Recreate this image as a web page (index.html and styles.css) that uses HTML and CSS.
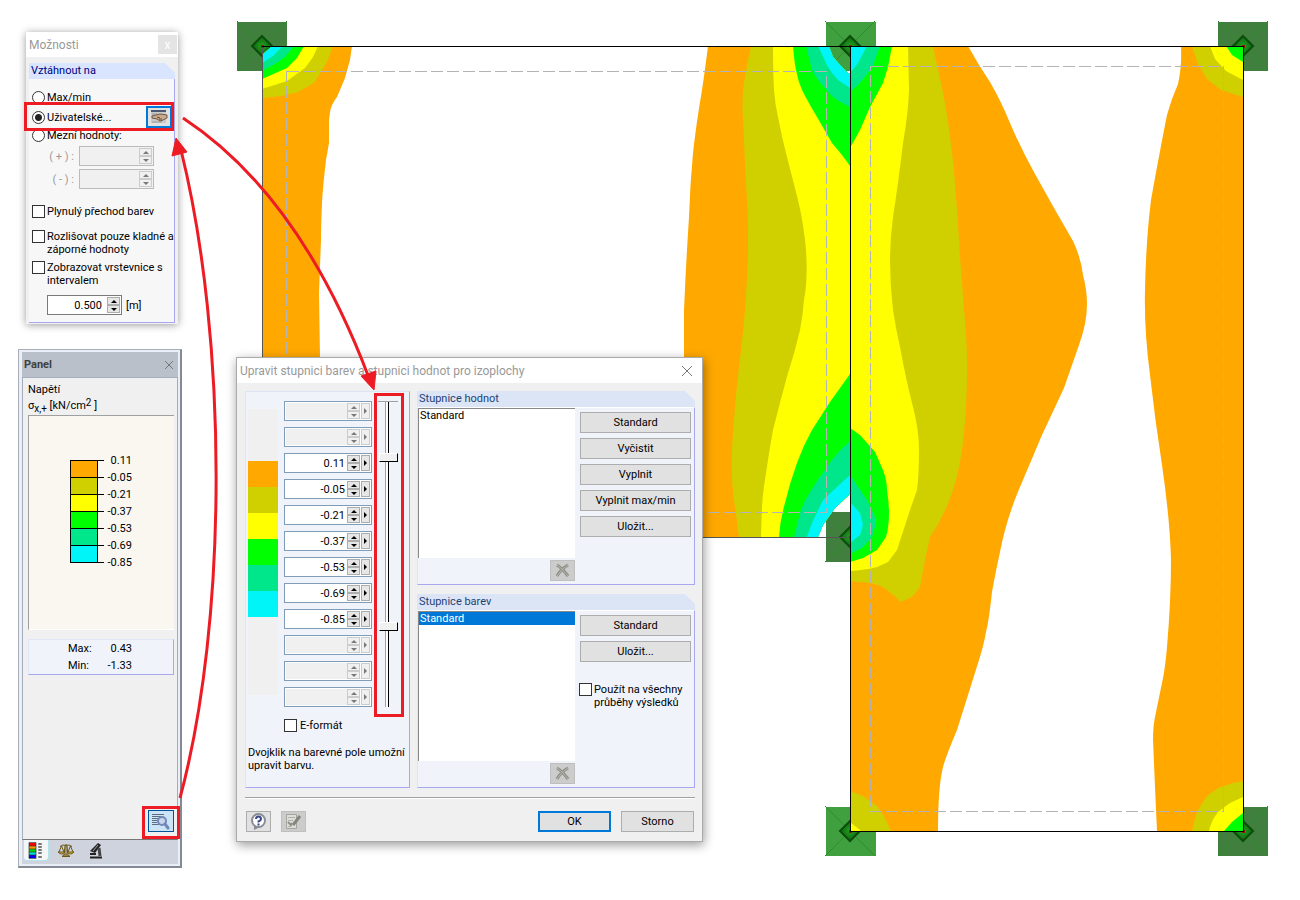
FILE: index.html
```html
<!DOCTYPE html>
<html lang="cs">
<head>
  <meta charset="UTF-8" />
  <meta name="viewport" content="width=device-width, initial-scale=1.0" />
  <title>Upravit stupnici barev</title>
  <link rel="stylesheet" href="styles.css">
</head>
<body>
<main class="workspace">

<!-- Model s izoplochami -->
<svg class="model" viewBox="0 0 1300 900" width="1300" height="900" aria-hidden="true">
  <defs>
    <clipPath id="plateLeft">
      <path clip-rule="evenodd" d="M262 46H850V537H262Z M262 46H272L262 55Z M829 46L833 57L842 67L848 73H850V46Z M818 537L823 525L835 508L850 494V537Z"/>
    </clipPath>
    <clipPath id="plateRight"><path d="M850 46H1243V831H850Z"/></clipPath>
    <radialGradient id="node"><stop offset="0" stop-color="#20a020"/><stop offset="1" stop-color="#106510"/></radialGradient>
    <g id="support">
      <path class="support-lines" d="M-25 -25L25 25M-25 25L25 -25"/>
      <path class="support-node" d="M0 -10L10 0L0 10L-10 0Z"/>
      <rect class="support-dot" x="-1" y="-1" width="3" height="3"/>
    </g>
  </defs>

  <!-- podpory -->
  <g class="supports">
    <rect class="dark" x="237" y="22" width="50" height="49"/>
    <rect class="light" x="826" y="22" width="50" height="49"/>
    <rect class="dark" x="1218" y="22" width="50" height="49"/>
    <rect class="dark" x="826" y="512" width="50" height="50"/>
    <rect class="light" x="826" y="807" width="50" height="49"/>
    <rect class="dark" x="1218" y="807" width="50" height="49"/>
    <use href="#support" x="262" y="46"/>
    <use href="#support" x="850" y="46"/>
    <use href="#support" x="1243" y="46"/>
    <use href="#support" x="850" y="537"/>
    <use href="#support" x="850" y="831"/>
    <use href="#support" x="1243" y="831"/>
  </g>

  <!-- levá deska -->
  <g clip-path="url(#plateLeft)">
    <path class="c1" d="M262 46H352L350 60L345 78L337 97Q331 105 330 112L329 120V143L326 160Q323 185 322 203Q321 225 321 240L319 293L320 358V537H262Z"/>
    <path class="c2" d="M262 46H333L327 62L314 83L298 92L282 96L262 98Z"/>
    <path class="c3" d="M262 46H318L313 57L305 68L287 81L262 89Z"/>
    <path class="c4" d="M262 46H304L297 58L287 68L262 79Z"/>
    <path class="c5" d="M262 46H294L285 57L275 64L262 71Z"/>
    <path class="c6" d="M262 46H283L273 56L262 63Z"/>
    <path class="c1" d="M850 46H708Q705 70 702 90Q696 125 693 153Q690 185 689 217Q686 263 684 310V357L690 537H850Z"/>
    <path class="c2" d="M850 46H751Q746 68 743 90Q742 105 743 120L746 183Q748 210 748 237Q748 270 745 310Q743 335 739 367Q735 400 733 433Q731 460 732 480Q733 495 735 507L739 537H850Z"/>
    <path class="c3" d="M850 46H773Q773 70 774 90Q775 104 778 117Q782 138 787 157Q793 180 798 200Q804 225 806 250Q808 280 804 300Q803 315 800 330Q795 352 788 373Q780 402 773 430Q769 452 766 473Q763 490 762 507L761 537H850Z"/>
    <path class="c4" d="M850 46H793Q794 60 796 70Q798 81 802 90Q808 102 817 117L832 143L842 155L850 166Z"/>
    <path class="c5" d="M850 46H806L812 70Q817 80 825 88Q831 96 837 100L850 107Z"/>
    <path class="c6" d="M850 46H818L827 65Q832 74 838 80L850 88Z"/>
    <path class="c4" d="M850 374L830 402L812 430Q803 446 797 463Q790 482 785 503Q780 520 779 537H850Z"/>
    <path class="c5" d="M850 441Q837 452 827 467Q818 479 810 492Q803 503 800 513L794 537H850Z"/>
    <path class="c6" d="M850 475L837 487L823 500Q817 512 812 523L807 537H850Z"/>
  </g>

  <!-- pravá deska -->
  <g clip-path="url(#plateRight)">
    <path class="c1" d="M850 46H968L979 65L990 82Q1001 101 1010 123Q1021 149 1035 174L1054 208L1073 241Q1081 258 1083 275Q1087 290 1087 304Q1087 323 1079 345L1064 388L1042 435L1020 487Q1006 520 1000 552Q996 570 992 592Q989 620 986 632Q984 644 979 660L957 730Q946 756 943 767Q938 787 938 831H850Z"/>
    <path class="c2" d="M850 46H933Q939 73 945 103Q952 145 955 183Q958 220 960 257L964 310Q967 340 967 367Q967 405 964 433Q961 465 953 490Q945 515 930 537L925 560L920 587L912 597L900 602L897 598L883 587Q877 584 870 583L850 581Z"/>
    <path class="c3" d="M850 46H908L909 90Q908 115 903 143Q898 185 893 217Q890 240 890 260Q890 285 893 310Q896 330 900 347Q906 380 913 407Q919 430 919 450Q919 475 917 490L910 510L897 550L888 562L877 567Q865 570 850 571Z"/>
    <path class="c4" d="M850 46H892L888 67L883 83L870 107L860 130L850 148Z"/>
    <path class="c5" d="M850 46H880L872 68L860 83L850 92Z"/>
    <path class="c6" d="M850 46H867L858 63L850 73Z"/>
    <path class="c4" d="M850 428L860 435L875 452L883 470Q887 481 887 490Q889 503 889 513Q889 527 886 537L877 550L863 558L850 562Z"/>
    <path class="c5" d="M850 475L867 500L875 517V527L872 537L862 548L850 554Z"/>
    <path class="c6" d="M850 502L860 513L863 525L860 535L850 543Z"/>
    <path class="c1" d="M1243 46H1181Q1182 66 1178 84Q1171 100 1167 115Q1160 150 1151 200Q1146 240 1145 290Q1144 330 1150 375Q1155 420 1162 465Q1170 520 1171 560Q1171 600 1167 647Q1165 670 1162 683L1155 717Q1153 727 1153 740L1155 787L1157 831H1243Z"/>
    <path class="c2" d="M1243 46H1192L1198 64L1207 79L1221 90L1243 97Z"/>
    <path class="c3" d="M1243 46H1210L1215 59L1226 71L1243 80Z"/>
    <path class="c4" d="M1243 46H1226L1232 55L1243 62Z"/>
    <path class="c2" d="M1243 781L1233 783L1218 788L1207 796L1198 810Q1194 820 1192 831H1243Z"/>
    <path class="c3" d="M1243 797L1230 803L1218 812Q1211 821 1209 831H1243Z"/>
    <path class="c4" d="M1243 813L1232 822L1224 831H1243Z"/>
    <path class="c2" d="M850 791L863 796L877 806L885 818L891 831H850Z"/>
    <path class="c3" d="M850 822L861 831H850Z"/>
  </g>

  <path class="dashes" d="M286.500 71.500H826.500V512.500H286.500ZM870.500 66.500H1223.500V811.500H870.500Z"/>
  <path class="edge-soft" d="M262.500 46V537.500H850"/>
  <path class="edge" d="M262 46.500H1243.500V831.500H850.500V46"/>
</svg>

<!-- Možnosti -->
<section class="window options">
  <header class="title-bar">
    <h1>Možnosti</h1>
    <button class="options-close" aria-label="Zavřít">x</button>
  </header>
  <div class="options-group">
    <h2 class="group-title">Vztáhnout na</h2>
    <div class="options-body">
      <label class="choice"><input type="radio" name="base"> Max/min</label>
      <div class="choice-row">
        <label class="choice"><input type="radio" name="base" checked> Uživatelské...</label>
        <button class="hand-button" aria-label="Upravit">
          <svg viewBox="0 0 18 14" width="18" height="14">
            <rect x="1" y="0" width="15" height="13" fill="#c9c9c9"/>
            <path d="M1 1H16" stroke="#4b5875" stroke-width="2"/>
            <path d="M2 4H7M2 12H12" stroke="#999"/>
            <path d="M2 6L6 5L10 4L17 5V8L13 10L10 11L7 9L2 8Z" fill="#cba98b" stroke="#6d5848"/>
            <path d="M7 7L10 8M9 9L12 9" stroke="#5d4a3e"/>
          </svg>
        </button>
      </div>
      <label class="choice"><input type="radio" name="base"> Mezní hodnoty:</label>
      <div class="limit">
        <label for="limitPlus">( + ) :</label>
        <div class="spin off"><input id="limitPlus" type="text" disabled><span class="steps"><button disabled aria-label="Zvýšit"></button><button disabled aria-label="Snížit"></button></span></div>
      </div>
      <div class="limit">
        <label for="limitMinus">( - ) :</label>
        <div class="spin off"><input id="limitMinus" type="text" disabled><span class="steps"><button disabled aria-label="Zvýšit"></button><button disabled aria-label="Snížit"></button></span></div>
      </div>
      <div class="checks">
        <label class="choice"><input type="checkbox"> Plynulý přechod barev</label>
        <label class="choice"><input type="checkbox"> <span>Rozlišovat pouze kladné a<br>záporné hodnoty</span></label>
        <label class="choice"><input type="checkbox"> <span>Zobrazovat vrstevnice s<br>intervalem</span></label>
      </div>
      <div class="interval">
        <div class="spin"><input id="interval" type="text" value="0.500"><span class="steps"><button aria-label="Zvýšit"></button><button aria-label="Snížit"></button></span></div>
        <label for="interval">[m]</label>
      </div>
    </div>
  </div>
</section>

<!-- Panel -->
<section class="panel">
  <header class="panel-title">
    <h1>Panel</h1>
    <button class="close" aria-label="Zavřít"><svg viewBox="0 0 8 8" width="8" height="8"><path d="M0 0L8 8M8 0L0 8"/></svg></button>
  </header>
  <div class="panel-body">
    <p class="quantity">Napětí<br>σ<sub>x,+</sub> [kN/cm<sup>2</sup> ]</p>
    <div class="legend">
      <div class="legend-colors">
        <i class="b1"></i><i class="b2"></i><i class="b3"></i><i class="b4"></i><i class="b5"></i><i class="b6"></i>
      </div>
      <div class="legend-ticks"><i></i><i></i><i></i><i></i><i></i><i></i></div>
      <ul class="legend-values">
        <li>0.11</li><li>-0.05</li><li>-0.21</li><li>-0.37</li><li>-0.53</li><li>-0.69</li><li>-0.85</li>
      </ul>
    </div>
    <dl class="extremes">
      <dt>Max:</dt><dd>0.43</dd>
      <dt>Min:</dt><dd>-1.33</dd>
    </dl>
    <button class="options-button" aria-label="Možnosti">
      <svg viewBox="0 0 20 18" width="20" height="18">
        <path d="M1 2.500H13M1 4.500H11M1 6.500H7M1 8.500H6M1 10.500H6M1 12.500H8" stroke="#5d6d80"/>
        <circle cx="11" cy="9" r="4" fill="#c7d5ef" stroke="#7288b8" stroke-width="2"/>
        <path d="M14 12L17 16" stroke="#7288b8" stroke-width="3" stroke-linecap="round"/>
      </svg>
    </button>
  </div>
  <nav class="panel-tabs">
    <button class="tab active" aria-label="Barvy">
      <svg viewBox="0 0 16 17" width="16" height="17">
        <path fill="#f00" d="M1 1h7v3H1z"/><path fill="#ff9a00" d="M1 4h7v3H1z"/><path fill="#0d0" d="M1 7h7v3H1z"/><path fill="#0dd" d="M1 10h7v3H1z"/><path fill="#00e" d="M1 13h7v3H1z"/>
        <path d="M1 .500h7v16H1zM1 4h7M1 7h7M1 10h7M1 13h7" fill="none" stroke="#333" stroke-width=".7"/>
        <path d="M10.500 1.500h3v1h-3zM10.500 4.500h3v1h-3zM10.500 7.500h3v1h-3zM10.500 10.500h3v1h-3zM10.500 14.500h3v1h-3z" fill="none" stroke="#777"/>
      </svg>
    </button>
    <button class="tab" aria-label="Měřítko">
      <svg viewBox="0 0 16 15" width="16" height="15" fill="none" stroke="#6b5717">
        <path d="M2 3.500Q5 1 8 2.500Q11 1 14 3.500M8 1V12M3.500 3L1 9M3.500 3L6 9M12.500 3L10 9M12.500 3L15 9M7 3L6 12M9 3L10 12"/>
        <path d="M0 9H7Q3.500 13 0 9ZM9 9H16Q12.500 13 9 9ZM4 13.500L6 12H10L12 13.500Z" fill="#d7b64a"/>
      </svg>
    </button>
    <button class="tab" aria-label="Filtr">
      <svg viewBox="0 0 16 17" width="16" height="17">
        <path d="M10 1L13 3L7 11L2 9Z" fill="#222"/>
        <path d="M11 6L12 14" fill="none" stroke="#444" stroke-width="3"/>
        <path d="M2 12L8 12M2 15.500H14" stroke="#222" stroke-width="2"/>
        <path d="M10 3L5 9" stroke="#aaa"/>
      </svg>
    </button>
  </nav>
</section>

<!-- Dialog stupnice -->
<section class="window dialog">
  <header class="title-bar">
    <h1>Upravit stupnici barev a stupnici hodnot pro izoplochy</h1>
    <button class="close" aria-label="Zavřít"><svg viewBox="0 0 10 10" width="10" height="10"><path d="M0 0L10 10M10 0L0 10"/></svg></button>
  </header>
  <div class="dialog-body">
    <div class="columns">
      <div class="scale-group">
        <div class="scale">
          <div class="strip">
            <i></i><i></i><i class="b1"></i><i class="b2"></i><i class="b3"></i><i class="b4"></i><i class="b5"></i><i class="b6"></i><i></i><i></i><i></i>
          </div>
          <div class="values" id="values"></div>
          <div class="slider">
            <input type="range" min="0" max="1000" value="172" aria-label="Horní mez">
            <input type="range" min="0" max="1000" value="744" aria-label="Dolní mez">
          </div>
        </div>
        <label class="choice e-format"><input type="checkbox"> E-formát</label>
        <p class="hint">Dvojklik na barevné pole umožní<br>upravit barvu.</p>
      </div>
      <div class="sets">
        <div class="set">
          <h2 class="group-title">Stupnice hodnot</h2>
          <div class="set-body">
            <div class="set-list">
              <select size="8" aria-label="Stupnice hodnot"><option>Standard</option></select>
              <button class="icon-button off" disabled aria-label="Smazat"><svg viewBox="0 0 15 15" width="15" height="15"><path d="M2 2Q7 5 13 13M13 2Q6 6 2 13" fill="none" stroke="#8b8c84" stroke-width="3"/><path d="M2 2Q7 5 13 13M13 2Q6 6 2 13" fill="none" stroke="#b9bab2"/></svg></button>
            </div>
            <div class="set-buttons">
              <button class="btn">Standard</button>
              <button class="btn">Vyčistit</button>
              <button class="btn">Vyplnit</button>
              <button class="btn">Vyplnit max/min</button>
              <button class="btn">Uložit...</button>
            </div>
          </div>
        </div>
        <div class="set">
          <h2 class="group-title">Stupnice barev</h2>
          <div class="set-body">
            <div class="set-list">
              <select size="8" aria-label="Stupnice barev"><option class="picked">Standard</option></select>
              <button class="icon-button off" disabled aria-label="Smazat"><svg viewBox="0 0 15 15" width="15" height="15"><path d="M2 2Q7 5 13 13M13 2Q6 6 2 13" fill="none" stroke="#8b8c84" stroke-width="3"/><path d="M2 2Q7 5 13 13M13 2Q6 6 2 13" fill="none" stroke="#b9bab2"/></svg></button>
            </div>
            <div class="set-buttons">
              <button class="btn">Standard</button>
              <button class="btn">Uložit...</button>
              <label class="choice apply-all"><input type="checkbox"> <span>Použít na všechny<br>průběhy výsledků</span></label>
            </div>
          </div>
        </div>
      </div>
    </div>
    <footer class="dialog-footer">
      <button class="icon-button" aria-label="Nápověda">
        <svg viewBox="0 0 17 17" width="17" height="17"><path d="M4 12L4 17L10 14Z" fill="#8a8a90"/><circle cx="8.500" cy="7.500" r="6.500" fill="#fff" stroke="#8a8d98" stroke-width="2"/><path d="M6 6Q6 3.500 8.500 3.500Q11 3.500 11 6Q11 7.500 8.500 8.500V9.500M8.500 10.500V12.500" fill="none" stroke="#3a4a86" stroke-width="2"/></svg>
      </button>
      <button class="icon-button off" disabled aria-label="Komentář">
        <svg viewBox="0 0 17 17" width="17" height="17"><path d="M1.500 1.500H11.500V15.500H1.500Z" fill="#deded8" stroke="#a5a59e"/><path d="M3 4.500H10M3 7.500H8M3 13.500H6" stroke="#b0b0aa"/><path d="M15 3L8 12" stroke="#85867f" stroke-width="3"/><path d="M3 9L6 12L7 10" fill="none" stroke="#8f9089" stroke-width="2"/></svg>
      </button>
      <span class="spacer"></span>
      <button class="btn ok">OK</button>
      <button class="btn">Storno</button>
    </footer>
  </div>
</section>

<!-- Zvýraznění postupu -->
<svg class="marks" viewBox="0 0 1300 900" width="1300" height="900" aria-hidden="true">
  <path d="M25.500 103.500H172.500V129.500H25.500ZM143.500 807.500H178.500V837.500H143.500ZM375.500 394.500H402.500V715.500H375.500Z"/>
  <path d="M183 118Q300 195 369 378"/>
  <path d="M180 798C228 620 228 340 181 150"/>
  <path class="head" d="M361 376L376 371L374 390ZM172 156L187 152L176 138Z"/>
</svg>

</main>

<script>
  // 12 hodnot stupnice, prázdné jsou neaktivní
  const values = ['', '', '0.11', '-0.05', '-0.21', '-0.37', '-0.53', '-0.69', '-0.85', '', '', ''];

  document.getElementById('values').innerHTML = values.map((value, i) => {
    const disabled = value === '' ? 'disabled' : '';
    return `<div class="spin ${disabled ? 'off' : ''}">
      <input type="text" value="${value}" aria-label="Hodnota ${i + 1}" ${disabled}>
      <span class="steps"><button aria-label="Zvýšit" ${disabled}></button><button aria-label="Snížit" ${disabled}></button></span>
      <button class="more" aria-label="Další" ${disabled}></button>
    </div>`;
  }).join('');
</script>
</body>
</html>
```
FILE: styles.css
```css
*, *::before, *::after {
  box-sizing: border-box;
}
body {
  margin: 0;
  background: #fff;
  color: #000;
  font-family: Roboto, "Liberation Sans", sans-serif;
  font-size: 11px;
  line-height: 13px;
}
h1, h2, p, ul, dl, dd {
  margin: 0;
  padding: 0;
  font-size: inherit;
  font-weight: normal;
}
button, input, select {
  margin: 0;
  padding: 0;
  font: inherit;
  color: inherit;
}
button {
  display: flex;
  align-items: center;
  justify-content: center;
}
.workspace {
  position: relative;
  min-height: 100vh;
  overflow: hidden;
}
.model, .marks {
  display: block;
}
.marks {
  position: absolute;
  top: 0;
  left: 0;
  pointer-events: none;
  fill: none;
  stroke: #ed1c24;
  stroke-width: 3;
}
.marks .head {
  fill: #ed1c24;
  stroke-width: 1;
}

/* izoplochy */
.c1 { fill: #ffa800; }
.c2 { fill: #d0d000; }
.c3 { fill: #ffff00; }
.c4 { fill: #00ff00; }
.c5 { fill: #00e68a; }
.c6 { fill: #00f5f8; }
.b1 { background: #ffa800; }
.b2 { background: #d0d000; }
.b3 { background: #ffff00; }
.b4 { background: #00ff00; }
.b5 { background: #00e68a; }
.b6 { background: #00f5f8; }
.dark { fill: #407f3e; }
.light { fill: #409f3e; }
.support-lines {
  stroke: #2c8f2a;
  stroke-width: 1;
}
.support-node {
  fill: url(#node);
  stroke: #0b4d0b;
  stroke-width: 2;
}
.support-dot {
  fill: #8b1a0a;
}
.dashes {
  fill: none;
  stroke: #b4b4b4;
  stroke-dasharray: 12 4;
  shape-rendering: crispEdges;
}
.edge, .edge-soft {
  fill: none;
  stroke: #000;
  shape-rendering: crispEdges;
}
.edge-soft {
  stroke: #555;
}

/* okna */
.window {
  position: absolute;
  background: #f0f0f0;
}
.title-bar {
  display: flex;
  align-items: center;
  justify-content: space-between;
  height: 25px;
  background: #fff;
  color: #999;
  font-size: 12px;
  line-height: 16px;
}
.close {
  width: 20px;
  height: 20px;
  border: 0;
  background: none;
}
.close svg {
  fill: none;
  stroke: #777;
}
.group-title {
  height: 16px;
  padding-left: 2px;
  line-height: 16px;
  background: #dbe5f5;
  color: #1f3f77;
  clip-path: polygon(0 0, calc(100% - 10px) 0, 100% 10px, 100% 100%, 0 100%);
}

/* volby */
.choice {
  display: flex;
  align-items: flex-start;
  gap: 2px;
  white-space: nowrap;
}
.choice input {
  appearance: none;
  flex: none;
  width: 13px;
  height: 13px;
  border: 1px solid #333;
  background: #fff;
}
.choice input[type="radio"] {
  border-radius: 50%;
}
.choice input[type="radio"]:checked {
  background: radial-gradient(#222 3px, #fff 4px);
}

/* číselná pole */
.spin {
  display: flex;
  width: 75px;
  height: 20px;
  padding: 1px;
  border: 1px solid #7a7a7a;
  background: #fff;
}
.spin input {
  flex: 1;
  min-width: 0;
  padding-right: 2px;
  border: 0;
  background: none;
  text-align: right;
}
.steps {
  display: flex;
  flex-direction: column;
  width: 13px;
}
.steps button, .more {
  flex: 1;
  border: 1px solid #adadad;
  background: #e6e6e6;
}
.steps button::before, .more::before {
  content: "";
  border: 3px solid transparent;
}
.steps button:first-child::before {
  border-top: 0;
  border-bottom-color: #000;
}
.steps button:last-child::before {
  border-bottom: 0;
  border-top-color: #000;
}
.more {
  flex: none;
  width: 9px;
  margin-left: 1px;
}
.more::before {
  border-right: 0;
  border-left-color: #000;
}
.spin.off input {
  background: #f0f0f0;
}
.spin.off button {
  border-color: #ccc;
  background: #f0f0f0;
}
.spin.off button::before {
  opacity: 0.5;
}

/* Možnosti */
.options {
  top: 32px;
  left: 26px;
  width: 152px;
  padding-bottom: 1px;
  box-shadow: 0 1px 8px rgba(0, 0, 0, 0.4);
}
.options .title-bar {
  padding-left: 3px;
}
.options-close {
  width: 19px;
  height: 19px;
  margin-right: 1px;
  border: 0;
  background: #e4e4e4;
  color: #fff;
}
.options-group {
  margin: 6px 3px 0;
}
.options .group-title {
  background: #d9e5ff;
  color: #000080;
}
.options-body {
  display: flex;
  flex-direction: column;
  padding: 12px 2px 7px 3px;
  border-right: 1px solid #a8a8f0;
  border-bottom: 1px solid #a8a8f0;
  background: #f7f7f7;
}
.choice-row {
  display: flex;
  align-items: center;
  justify-content: space-between;
  height: 24px;
}
.options-body > .choice {
  height: 14px;
}
.hand-button {
  width: 26px;
  height: 22px;
  border: 2px solid #0078d7;
  background: #e1e1e1;
}
.limit {
  display: flex;
  align-items: center;
  gap: 5px;
  margin-top: 3px;
  color: #999;
}
.limit label {
  width: 42px;
  text-align: right;
}
.limit .spin {
  border-color: #bbb;
  background: #f0f0f0;
}
.checks {
  display: flex;
  flex-direction: column;
  gap: 5px;
  margin-top: 16px;
}
.checks .choice:first-child {
  margin-bottom: 7px;
}
.interval {
  display: flex;
  align-items: center;
  gap: 4px;
  margin: 8px 0 0 15px;
}
.interval input {
  padding-right: 5px;
}

/* Panel */
.panel {
  position: absolute;
  top: 349px;
  left: 18px;
  display: flex;
  flex-direction: column;
  width: 164px;
  height: 519px;
  padding: 2px 2px 2px 3px;
  border: 1px solid #a8adb8;
  border-right: 2px solid #858994;
  border-bottom: 2px solid #858994;
  background: #e9eef7;
}
.panel-title {
  display: flex;
  align-items: center;
  justify-content: space-between;
  height: 25px;
  padding-left: 2px;
  background: #b9c0ca;
  color: #404040;
}
.panel-title h1 {
  font-weight: bold;
}
.panel-title .close {
  width: 18px;
}
.panel-body {
  flex: 1;
  display: flex;
  flex-direction: column;
  padding: 4px 3px 7px 5px;
  border: 1px solid #a5adbd;
  border-bottom-color: #777;
  background: #f0f0f0;
}
.quantity {
  line-height: 16px;
}
.quantity sub, .quantity sup {
  font-size: 10px;
  line-height: 0;
}
.quantity sup {
  vertical-align: 3px;
}
.legend {
  display: flex;
  height: 215px;
  margin-top: 1px;
  padding: 44px 0 0 41px;
  border-top: 1px solid #a0a0a0;
  border-left: 1px solid #a0a0a0;
  border-bottom: 1px solid #fff;
  background: #faf6f0;
}
.legend-colors {
  width: 28px;
  height: 103px;
  border: 1px solid #000;
  border-bottom: 0;
}
.legend-colors i, .legend-ticks i {
  display: block;
  height: 17px;
  border-bottom: 1px solid #000;
}
.legend-ticks {
  width: 6px;
  height: 103px;
  border-top: 1px solid #000;
}
.legend-values {
  width: 28px;
  margin-top: -8px;
  line-height: 17px;
  list-style: none;
  text-align: right;
}
.extremes {
  display: grid;
  grid-template-columns: 24px 37px;
  gap: 0 3px;
  margin-top: 9px;
  padding: 0 0 0 39px;
  border: 1px solid #dfe6f5;
  border-right-color: #a8a8f0;
  border-bottom-color: #a8a8f0;
  background: #f0f4fa;
  line-height: 17px;
}
.extremes dd {
  text-align: right;
}
.options-button {
  align-self: flex-end;
  width: 26px;
  height: 22px;
  margin-top: auto;
  border: 1px solid #005499;
  background: #cce4f7;
}
.panel-tabs {
  display: flex;
  gap: 4px;
  height: 24px;
  padding-left: 1px;
  background: #cfd3dd;
}
.tab {
  width: 26px;
  height: 21px;
  border: 0;
  background: none;
}
.tab.active {
  border: 1px solid #b0e4ea;
  border-top: 0;
  border-radius: 0 0 4px 4px;
  background: #f4f6f8;
}

/* dialog */
.dialog {
  top: 357px;
  left: 236px;
  width: 467px;
  border: 1px solid #aaa;
  box-shadow: 1px 3px 10px rgba(0, 0, 0, 0.4);
}
.dialog .title-bar {
  padding: 0 5px 0 3px;
}
.dialog-body {
  padding: 8px 7px 9px 8px;
}
.columns {
  display: flex;
  gap: 7px;
  padding-bottom: 9px;
  border-bottom: 1px solid #a0a0a0;
}
.scale-group {
  width: 165px;
  padding: 9px 0 0 2px;
  border: 1px solid #dbe5f5;
  border-right-color: #a8a8f0;
  border-bottom-color: #a8a8f0;
  background: #f0f4fa;
}
.scale {
  display: flex;
  gap: 6px;
}
.strip {
  width: 30px;
  padding-top: 8px;
}
.strip i {
  display: block;
  height: 26px;
}
.strip i:not([class]) {
  background: #f0f0f0;
}
.values {
  display: flex;
  flex-direction: column;
  gap: 6px;
}
.values .spin {
  width: 88px;
  border-color: #7f9db9;
}
.slider {
  display: grid;
  width: 20px;
  height: 306px;
  background: linear-gradient(to right, transparent 7px, #a0a0a0 7px 8px, #fff 8px 10px, #000 10px 11px, transparent 11px);
  border-top: 1px solid #a0a0a0;
}
.slider input {
  grid-area: 1 / 1;
  appearance: none;
  width: 20px;
  height: 305px;
  background: none;
  writing-mode: vertical-lr;
  pointer-events: none;
}
.slider input::-webkit-slider-thumb {
  appearance: none;
  width: 19px;
  height: 9px;
  border: 1px solid #fff;
  border-right: 1px solid #000;
  border-bottom: 1px solid #000;
  background: #f0f0f0;
  pointer-events: auto;
}
.e-format {
  margin: 12px 0 0 36px;
  gap: 3px;
}
.hint {
  margin-top: 14px;
  white-space: nowrap;
}
.sets {
  flex: 1;
  display: flex;
  flex-direction: column;
  gap: 9px;
}
.set-body {
  display: flex;
  gap: 4px;
  height: 178px;
  border: 1px solid #dbe5f5;
  border-top-color: #fff;
  border-right-color: #a8a8f0;
  border-bottom-color: #a8a8f0;
  background: #f0f4fa;
}
.set-list {
  display: flex;
  flex-direction: column;
  align-items: flex-end;
  gap: 2px;
  width: 157px;
}
.set-list select {
  appearance: none;
  width: 157px;
  height: 150px;
  border: 0;
  border-top: 1px solid #888;
  border-left: 1px solid #888;
  border-radius: 0;
  background: #fff;
  overflow: hidden;
}
.set-list option {
  min-height: 13px;
  padding: 0 1px;
  line-height: 13px;
}
.set-list .picked {
  background: #0078d7;
  color: #fff;
}
.set-buttons {
  display: flex;
  flex: 1;
  flex-direction: column;
  gap: 5px;
  padding: 4px 3px 0 0;
}
.btn {
  height: 21px;
  border: 1px solid #adadad;
  background: #e1e1e1;
}
.set-buttons .btn {
  margin-left: 1px;
}
.apply-all {
  margin-top: 16px;
}
.icon-button {
  width: 25px;
  height: 21px;
  border: 1px solid #adadad;
  background: #e1e1e1;
}
.icon-button.off {
  border-color: #bfbfbf;
  background: #ccc;
}
.dialog-footer {
  display: flex;
  gap: 10px;
  padding: 12px 1px 0;
  border-top: 1px solid #fff;
}
.dialog-footer .btn {
  width: 73px;
}
.spacer {
  flex: 1;
}
.btn.ok {
  border: 2px solid #0078d7;
}
```
